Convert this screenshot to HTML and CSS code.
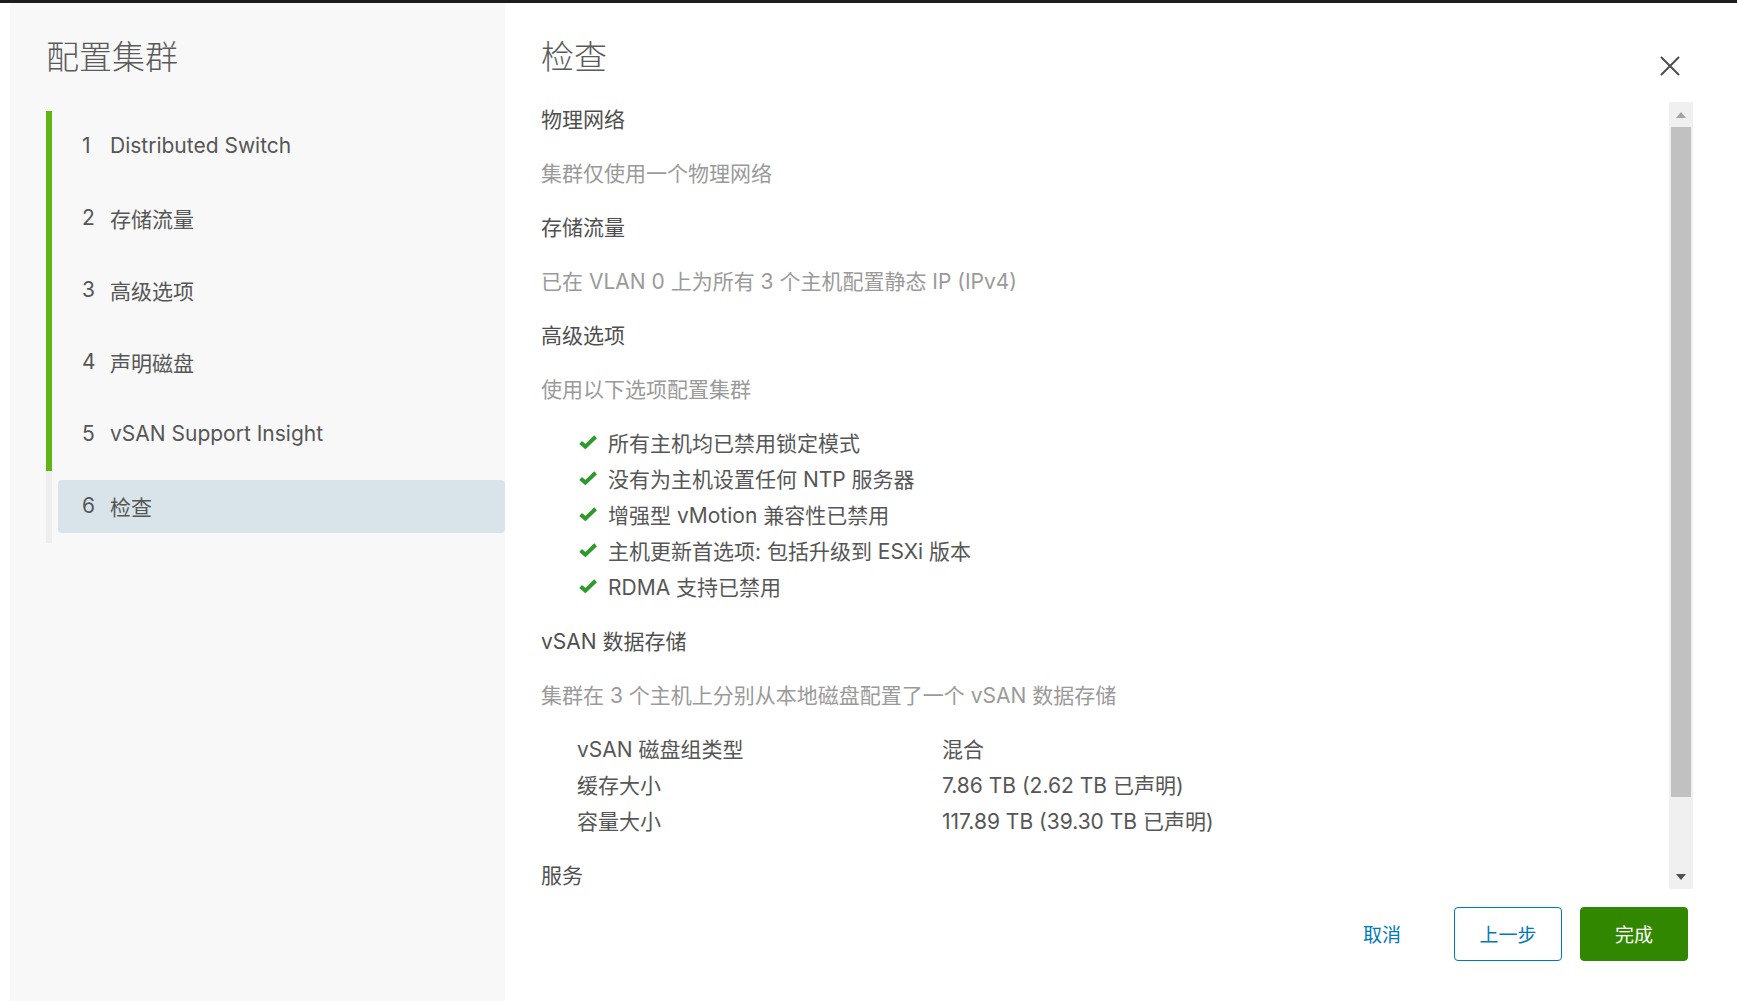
FILE: index.html
```html
<!DOCTYPE html>
<html lang="zh-CN">
<head>
	<meta charset="UTF-8">
	<title>配置集群</title>
	<link rel="stylesheet" href="styles.css">
</head>
<body>
	<div class="modal">
		<aside class="side">
			<h2 class="side-title">配置集群</h2>
			<ul class="steps">
				<li class="step done"><a href="#"><span class="step-num">1</span>Distributed Switch</a></li>
				<li class="step done"><a href="#"><span class="step-num">2</span>存储流量</a></li>
				<li class="step done"><a href="#"><span class="step-num">3</span>高级选项</a></li>
				<li class="step done"><a href="#"><span class="step-num">4</span>声明磁盘</a></li>
				<li class="step done"><a href="#"><span class="step-num">5</span>vSAN Support Insight</a></li>
				<li class="step current"><a href="#"><span class="step-num">6</span>检查</a></li>
			</ul>
		</aside>
		<main class="main">
			<div class="main-hd">
				<h3 class="main-title">检查</h3>
				<button class="close" type="button" aria-label="关闭">
					<svg width="20" height="20" viewBox="0 0 20 20"><path d="M1 1L19 19M19 1L1 19" stroke="#4d4d4d" stroke-width="2" fill="none"/></svg>
				</button>
			</div>
			<div class="main-bd">
				<div class="review">
					<h4 class="review-hd">物理网络</h4>
					<p class="review-desc">集群仅使用一个物理网络</p>
					<h4 class="review-hd">存储流量</h4>
					<p class="review-desc">已在 VLAN 0 上为所有 3 个主机配置静态 IP (IPv4)</p>
					<h4 class="review-hd">高级选项</h4>
					<p class="review-desc">使用以下选项配置集群</p>
					<ul class="checks">
						<li><svg class="check" viewBox="0 0 18 14"><path d="M1.6 7.4L6.4 11.6L16.6 1.8" stroke="#2f9a2c" stroke-width="4" fill="none"/></svg>所有主机均已禁用锁定模式</li>
						<li><svg class="check" viewBox="0 0 18 14"><path d="M1.6 7.4L6.4 11.6L16.6 1.8" stroke="#2f9a2c" stroke-width="4" fill="none"/></svg>没有为主机设置任何 NTP 服务器</li>
						<li><svg class="check" viewBox="0 0 18 14"><path d="M1.6 7.4L6.4 11.6L16.6 1.8" stroke="#2f9a2c" stroke-width="4" fill="none"/></svg>增强型 vMotion 兼容性已禁用</li>
						<li><svg class="check" viewBox="0 0 18 14"><path d="M1.6 7.4L6.4 11.6L16.6 1.8" stroke="#2f9a2c" stroke-width="4" fill="none"/></svg>主机更新首选项: 包括升级到 ESXi 版本</li>
						<li><svg class="check" viewBox="0 0 18 14"><path d="M1.6 7.4L6.4 11.6L16.6 1.8" stroke="#2f9a2c" stroke-width="4" fill="none"/></svg>RDMA 支持已禁用</li>
					</ul>
					<h4 class="review-hd">vSAN 数据存储</h4>
					<p class="review-desc">集群在 3 个主机上分别从本地磁盘配置了一个 vSAN 数据存储</p>
					<dl class="props">
						<dt>vSAN 磁盘组类型</dt><dd>混合</dd>
						<dt>缓存大小</dt><dd>7.86 TB (2.62 TB 已声明)</dd>
						<dt>容量大小</dt><dd>117.89 TB (39.30 TB 已声明)</dd>
					</dl>
					<h4 class="review-hd">服务</h4>
				</div>
				<div class="scrollbar">
					<span class="sb-btn sb-up"></span>
					<span class="sb-thumb"></span>
					<span class="sb-btn sb-down"></span>
				</div>
			</div>
			<div class="main-ft">
				<button class="btn btn-link" type="button">取消</button>
				<button class="btn btn-outline" type="button">上一步</button>
				<button class="btn btn-success" type="button">完成</button>
			</div>
		</main>
	</div>
</body>
</html>
```

FILE: styles.css
```css
*{box-sizing: border-box;}
html,body{margin:0;padding:0;height:100%;}
body{
	background:#fff;
	font-family: Inter, "Noto Sans CJK SC", sans-serif;
	color:#565656;
	overflow:hidden;
}
ul,dl,dd,p,h2,h3,h4{margin:0;padding:0;}
li{list-style: none;}
a{text-decoration:none;color:inherit;}
button{font-family:inherit;cursor:pointer;}

.modal{
	display:flex;
	height:100%;
	border-top:3px solid #1c1c1c;
	padding-left:10px;
}

/* left: steps */
.side{
	width:495px;
	flex:none;
	background:#f8f8f8;
	padding:34px 0 0 36px;
}
.side-title{
	font-size:33px;
	line-height:40px;
	font-weight:300;
	color:#5a5a5a;
	margin-bottom:34px;
}
.step{
	height:72px;
	border-left:6px solid #60b515;
	padding:9px 0 10px 6px;
}
.step.current{border-left-color:#eee;}
.step a{
	display:flex;
	align-items:center;
	height:53px;
	padding:0 0 2px 24px;
	border-radius:4px;
	font-size:21px;
	color:#565656;
}
.step.current a{background:#d9e4ea;}
.step-num{width:28px;flex:none;}

/* right: review */
.main{
	flex:1;
	display:flex;
	flex-direction:column;
	padding:34px 44px 0 36px;
	min-width:0;
}
.main-hd{
	display:flex;
	justify-content:space-between;
	align-items:flex-start;
	height:40px;
	margin-bottom:25px;
}
.main-title{
	font-size:33px;
	line-height:40px;
	font-weight:300;
	color:#5a5a5a;
}
.close{
	border:0;
	background:none;
	padding:0;
	width:20px;
	height:20px;
	margin:19px 13px 0 0;
}
.close svg{display:block;}

.main-bd{
	display:flex;
	height:787px;
}
.review{
	flex:1;
	overflow:hidden;
	font-size:21px;
	line-height:36px;
}
.review-hd{
	font-weight:400;
	color:#4f4f4f;
	margin-bottom:18px;
}
.review-desc{
	color:#9a9a9a;
	margin-bottom:18px;
}
.checks{
	padding-left:38px;
	margin-bottom:18px;
	color:#565656;
}
.checks li{
	display:flex;
	align-items:center;
}
.check{
	width:18px;
	height:14px;
	margin:-5px 11px 0 0;
	flex:none;
}
.props{
	display:grid;
	grid-template-columns:365px auto;
	padding-left:36px;
	margin-bottom:18px;
	color:#565656;
}

/* fake scrollbar */
.scrollbar{
	width:24px;
	flex:none;
	background:#f0f0f0;
	display:flex;
	flex-direction:column;
	padding:0 2px;
}
.sb-btn{
	height:25px;
	flex:none;
	display:flex;
	align-items:center;
	justify-content:center;
}
.sb-up::after{
	content:"";
	border-left:5.5px solid transparent;
	border-right:5.5px solid transparent;
	border-bottom:6px solid #a3a3a3;
}
.sb-down{margin-top:auto;}
.sb-down::after{
	content:"";
	border-left:5.5px solid transparent;
	border-right:5.5px solid transparent;
	border-top:6px solid #505050;
}
.sb-thumb{
	height:670px;
	background:#c1c1c1;
}

/* footer buttons */
.main-ft{
	display:flex;
	justify-content:flex-end;
	gap:18px;
	margin:18px 5px 0 0;
}
.btn{
	width:108px;
	height:54px;
	border-radius:4px;
	font-size:19px;
	border:1px solid transparent;
	background:none;
	padding:0 0 2px;
}
.btn-link{color:#0079b8;}
.btn-outline{
	color:#0079b8;
	border-color:#0079b8;
	background:#fff;
}
.btn-success{
	color:#fff;
	background:#318700;
	border-color:#318700;
}
```
